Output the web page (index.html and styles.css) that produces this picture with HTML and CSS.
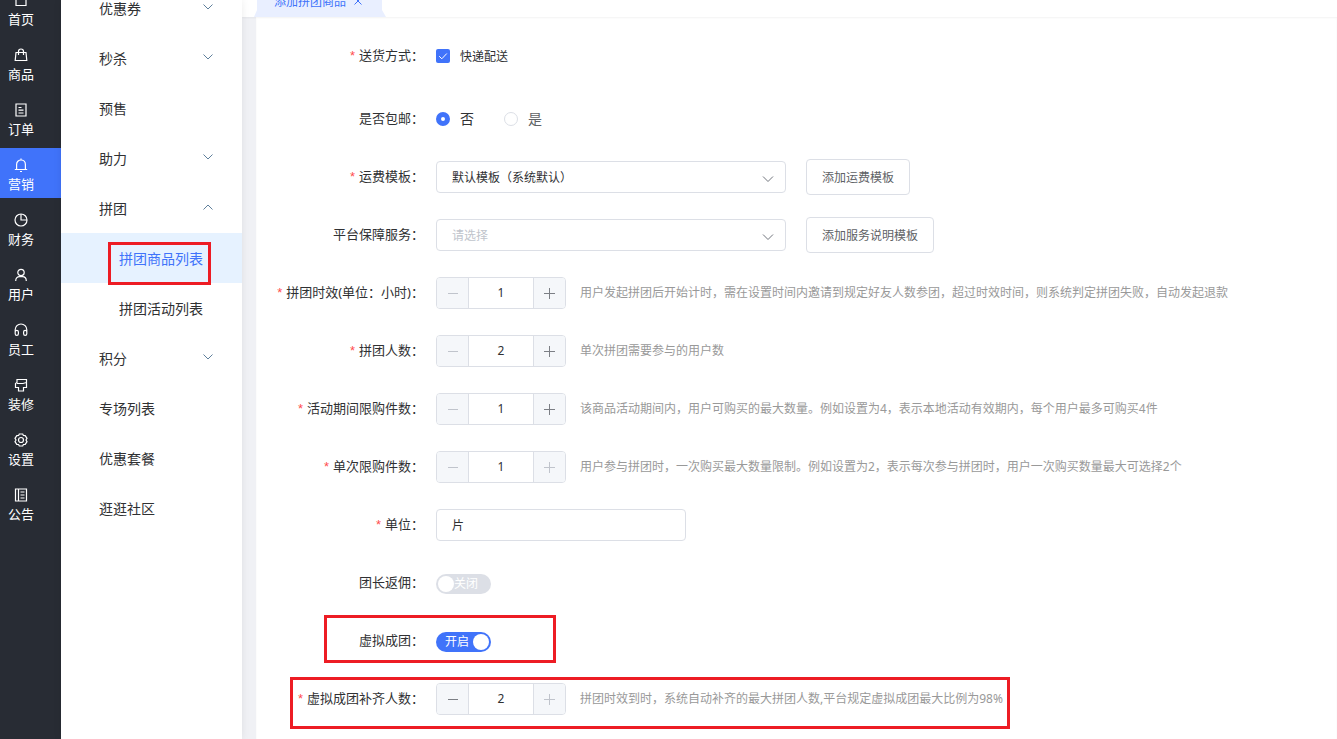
FILE: index.html
```html
<!DOCTYPE html>
<html lang="zh-CN">
<head>
    <meta charset="UTF-8">
    <meta name="viewport" content="width=device-width, initial-scale=1.0">
    <title>添加拼团商品</title>
    <link rel="stylesheet" href="styles.css">
</head>
<body>
    <div class="app">
        <nav class="rail">
            <a class="rail-item"><svg class="icon" viewBox="0 0 14 14"><path d="M2 5.5L7 1.5l5 4M2 5v7.500h10V5"/></svg><span>首页</span></a>
            <a class="rail-item"><svg class="icon" viewBox="0 0 14 14"><path d="M2 4.500h10l.800 8H1.200zM4.500 7V3.500a2.500 2.500 0 0 1 5 0V7"/></svg><span>商品</span></a>
            <a class="rail-item"><svg class="icon" viewBox="0 0 14 14"><path d="M2 1h10v12H2zM4.500 4.500h3M4.500 7.200h5M4.500 10h5"/></svg><span>订单</span></a>
            <a class="rail-item active"><svg class="icon" viewBox="0 0 14 14"><path d="M.8 11.500h12.400M2.600 11.500V6.400a4.400 4.400 0 0 1 8.800 0v5.100M7 .5V2M6 13.500h2"/></svg><span>营销</span></a>
            <a class="rail-item"><svg class="icon" viewBox="0 0 14 14"><circle cx="7" cy="7" r="6"/><path d="M7 1v6h6"/></svg><span>财务</span></a>
            <a class="rail-item"><svg class="icon" viewBox="0 0 14 14"><circle cx="7" cy="4.500" r="3.200"/><path d="M1.700 13c0-3 1.800-4.300 3.800-4.300h3c2 0 3.800 1.300 3.800 4.300"/></svg><span>用户</span></a>
            <a class="rail-item"><svg class="icon" viewBox="0 0 14 14"><path d="M1.200 9V6.800a5.800 5.800 0 0 1 11.600 0V9M1.200 9a1.600 1.600 0 0 1 3.200 0v1.800a1.600 1.600 0 0 1-3.200 0zM9.600 9a1.600 1.600 0 0 1 3.200 0v1.800a1.600 1.600 0 0 1-3.200 0z"/></svg><span>员工</span></a>
            <a class="rail-item"><svg class="icon" viewBox="0 0 14 14"><path d="M3 1.500h9.500v8H9.500v3.500h-5V9.500H1.500v-4L3 4.500zM3 5.500h6L12.500 4.500"/></svg><span>装修</span></a>
            <a class="rail-item"><svg class="icon" viewBox="0 0 14 14"><path d="M5.300 1h3.400l.7 1.500 1.800.1L13 5.300 12 7l1 1.700-1.800 2.700-1.800.1-.7 1.500H5.300l-.7-1.500-1.800-.1L1 8.700 2 7 1 5.300l1.800-2.700 1.800-.1z"/><circle cx="7" cy="7" r="2.500"/></svg><span>设置</span></a>
            <a class="rail-item"><svg class="icon" viewBox="0 0 14 14"><path d="M1.500 1h11v12h-11zM4.500 1v12M6.500 4h4M6.500 7h4M6.500 10h4"/></svg><span>公告</span></a>
        </nav>

        <aside class="menu">
            <a class="menu-item">优惠券<svg class="arrow" viewBox="0 0 12 12"><path d="M1.500 3.500L6 8l4.500-4.500"/></svg></a>
            <a class="menu-item">秒杀<svg class="arrow" viewBox="0 0 12 12"><path d="M1.500 3.500L6 8l4.500-4.500"/></svg></a>
            <a class="menu-item">预售</a>
            <a class="menu-item">助力<svg class="arrow" viewBox="0 0 12 12"><path d="M1.500 3.500L6 8l4.500-4.500"/></svg></a>
            <a class="menu-item">拼团<svg class="arrow" viewBox="0 0 12 12"><path d="M1.500 8.500L6 4l4.500 4.500"/></svg></a>
            <a class="menu-item sub active">拼团商品列表</a>
            <a class="menu-item sub">拼团活动列表</a>
            <a class="menu-item">积分<svg class="arrow" viewBox="0 0 12 12"><path d="M1.500 3.500L6 8l4.500-4.500"/></svg></a>
            <a class="menu-item">专场列表</a>
            <a class="menu-item">优惠套餐</a>
            <a class="menu-item">逛逛社区</a>
        </aside>

        <main class="main">
            <div class="tabs">
                <div class="tab">添加拼团商品<svg class="tab-close" viewBox="0 0 10 10"><path d="M1.500 1.500l7 7M8.500 1.500l-7 7"/></svg></div>
            </div>

            <form class="form">
                <div class="row row-check">
                    <label class="label required">送货方式：</label>
                    <span class="checkbox"><svg viewBox="0 0 14 14"><path d="M3.200 7.200l2.600 2.600 5-5.300"/></svg></span>
                    <span class="check-text">快递配送</span>
                </div>
                <div class="row row-radio">
                    <label class="label">是否包邮：</label>
                    <span class="radio checked"></span>
                    <span class="radio-text">否</span>
                    <span class="radio"></span>
                    <span class="radio-text muted">是</span>
                </div>
                <div class="row">
                    <label class="label required">运费模板：</label>
                    <div class="select">默认模板（系统默认）<svg class="select-arrow" viewBox="0 0 14 14"><path d="M2 4.500l5 5 5-5"/></svg></div>
                    <button type="button" class="btn">添加运费模板</button>
                </div>
                <div class="row">
                    <label class="label">平台保障服务：</label>
                    <div class="select placeholder">请选择<svg class="select-arrow" viewBox="0 0 14 14"><path d="M2 4.500l5 5 5-5"/></svg></div>
                    <button type="button" class="btn">添加服务说明模板</button>
                </div>
                <div class="row">
                    <label class="label required">拼团时效(单位：小时)：</label>
                    <div class="number"><i class="minus disabled"></i><span>1</span><i class="plus"></i></div>
                    <span class="hint">用户发起拼团后开始计时，需在设置时间内邀请到规定好友人数参团，超过时效时间，则系统判定拼团失败，自动发起退款</span>
                </div>
                <div class="row">
                    <label class="label required">拼团人数：</label>
                    <div class="number"><i class="minus disabled"></i><span>2</span><i class="plus"></i></div>
                    <span class="hint">单次拼团需要参与的用户数</span>
                </div>
                <div class="row">
                    <label class="label required">活动期间限购件数：</label>
                    <div class="number"><i class="minus disabled"></i><span>1</span><i class="plus"></i></div>
                    <span class="hint">该商品活动期间内，用户可购买的最大数量。例如设置为4，表示本地活动有效期内，每个用户最多可购买4件</span>
                </div>
                <div class="row">
                    <label class="label required">单次限购件数：</label>
                    <div class="number"><i class="minus disabled"></i><span>1</span><i class="plus disabled"></i></div>
                    <span class="hint">用户参与拼团时，一次购买最大数量限制。例如设置为2，表示每次参与拼团时，用户一次购买数量最大可选择2个</span>
                </div>
                <div class="row">
                    <label class="label required">单位：</label>
                    <div class="input">片</div>
                </div>
                <div class="row">
                    <label class="label">团长返佣：</label>
                    <div class="switch"><b></b>关闭</div>
                </div>
                <div class="row">
                    <label class="label">虚拟成团：</label>
                    <div class="switch on">开启<b></b></div>
                </div>
                <div class="row">
                    <label class="label required">虚拟成团补齐人数：</label>
                    <div class="number"><i class="minus"></i><span>2</span><i class="plus disabled"></i></div>
                    <span class="hint">拼团时效到时，系统自动补齐的最大拼团人数,平台规定虚拟成团最大比例为98%</span>
                </div>
            </form>
        </main>

        <!-- red highlight boxes -->
        <div class="mark mark-menu"></div>
        <div class="mark mark-switch"></div>
        <div class="mark mark-count"></div>
    </div>
</body>
</html>
```

FILE: styles.css
```css
* {
    box-sizing: border-box;
}
body {
    margin: 0;
    font-family: "Noto Sans", "Noto Sans CJK SC", sans-serif;
    font-size: 13px;
    color: #303133;
    background-color: #fff;
}
svg {
    fill: none;
    stroke: currentColor;
    flex: none;
}
.app {
    position: relative;
    display: flex;
    height: 739px;
    overflow: hidden;
}

/* dark rail */
.rail {
    width: 61px;
    flex: none;
    background-color: #282c34;
    color: #fff;
}
.rail-item {
    display: flex;
    flex-direction: column;
    align-items: flex-start;
    height: 50px;
    margin-bottom: 5px;
    padding: 10px 0 0 8px;
    line-height: 18px;
}
.rail-item:first-child {
    margin-top: -17px;
}
.rail-item.active {
    background-color: #4073fa;
}
.rail-item .icon {
    width: 14px;
    height: 14px;
    margin: 0 0 3px 6px;
    stroke-width: 1.2;
}

/* second level menu */
.menu {
    position: relative;
    z-index: 1;
    width: 181px;
    flex: none;
    background-color: #fff;
    box-shadow: 0 0 8px rgba(0,0,0,0.08);
    font-size: 14px;
}
.menu-item {
    display: flex;
    align-items: center;
    justify-content: space-between;
    height: 50px;
    padding: 0 28px 0 38px;
}
.menu-item:first-child {
    margin-top: -17px;
}
.menu-item.sub {
    padding-left: 58px;
}
.menu-item.active {
    background-color: #e6f2ff;
    color: #4073fa;
}
.arrow {
    width: 12px;
    height: 12px;
    margin-top: -2px;
    stroke: #5f7f9b;
}

/* content */
.main {
    flex: 1;
    min-width: 0;
    display: flex;
    flex-direction: column;
    background-color: #f0f1f5;
}
.tabs {
    height: 17px;
    flex: none;
    padding-left: 12px;
    background-color: #fff;
    box-shadow: 0 1px 2px rgba(0,0,0,0.05);
}
.tab {
    display: flex;
    align-items: center;
    width: 132px;
    height: 34px;
    margin-top: -17px;
    padding: 1px 0 0 20px;
    font-size: 12px;
    color: #4073fa;
    background-color: #e9efff;
    clip-path: polygon(3px 0, 128px 0, 128px 27px, 132px 34px, 0 34px, 3px 27px);
}
.tab-close {
    width: 10px;
    height: 10px;
    margin-left: 7px;
}
.form {
    position: relative;
    flex: 1;
    margin-left: 14px;
    padding-top: 22px;
    background-color: #fff;
    box-shadow: inset 0 1px 2px rgba(0,0,0,0.05);
}
.row {
    display: flex;
    align-items: center;
    height: 32px;
    margin-bottom: 26px;
}
.row-check {
    height: 34px;
    margin-bottom: 29px;
}
.row-radio {
    margin-bottom: 27px;
}
.label {
    width: 168px;
    flex: none;
    margin-right: 12px;
    padding-bottom: 2px;
    line-height: 18px;
    text-align: right;
    white-space: nowrap;
}
.row-radio .label {
    padding-bottom: 0;
}
.required::before {
    content: "*";
    margin-right: 4px;
    font-family: "Liberation Sans", Arial, sans-serif;
    color: #ff4d4f;
}
.checkbox {
    display: flex;
    width: 14px;
    height: 14px;
    border-radius: 2px;
    background-color: #4073fa;
    color: #fff;
}
.check-text {
    margin-left: 10px;
    font-size: 12px;
}
.radio {
    width: 14px;
    height: 14px;
    margin-top: 2px;
    border: 1px solid #dcdfe6;
    border-radius: 50%;
}
.radio.checked {
    border: 5px solid #4073fa;
}
.radio-text {
    margin: -1px 30px 0 10px;
    font-size: 14px;
}
.muted {
    color: #606266;
}
.select, .input {
    display: flex;
    align-items: center;
    justify-content: space-between;
    width: 350px;
    height: 32px;
    padding: 0 10px 0 15px;
    border: 1px solid #dcdfe6;
    border-radius: 4px;
    font-size: 12px;
}
.input {
    width: 250px;
}
.placeholder {
    color: #c0c4cc;
}
.select-arrow {
    width: 14px;
    height: 14px;
    margin-top: 3px;
    color: #70747c;
}
.btn {
    height: 36px;
    margin-left: 20px;
    padding: 0 15px 1px;
    border: 1px solid #dcdfe6;
    border-radius: 4px;
    background-color: #fff;
    font-family: inherit;
    font-size: 12px;
    color: #606266;
}
.number {
    display: flex;
    width: 130px;
    height: 32px;
    flex: none;
    border: 1px solid #dcdfe6;
    border-radius: 4px;
    overflow: hidden;
    font-size: 12px;
}
.number span {
    flex: 1;
    border: solid #dcdfe6;
    border-width: 0 1px;
    line-height: 30px;
    text-align: center;
}
.number i {
    width: 31px;
    color: #7c7f85;
    background: linear-gradient(currentColor, currentColor) center / 10px 1px no-repeat #f5f7fa;
}
.number .plus {
    background: linear-gradient(currentColor, currentColor) center / 11px 1px no-repeat, linear-gradient(currentColor, currentColor) center / 1px 11px no-repeat #f5f7fa;
}
.number .disabled {
    color: #c0c4cc;
}
.hint {
    margin-left: 14px;
    padding-bottom: 2px;
    font-size: 12px;
    color: #999;
    white-space: nowrap;
}
.switch {
    display: flex;
    align-items: center;
    width: 55px;
    height: 20px;
    margin-top: 2px;
    padding-left: 2px;
    border-radius: 10px;
    background-color: #dcdfe6;
    color: #fff;
    font-size: 12px;
    line-height: 18px;
}
.switch.on {
    padding-left: 9px;
    background-color: #4073fa;
}
.switch b {
    width: 16px;
    height: 16px;
    border-radius: 50%;
    background-color: #fff;
}
.switch.on b {
    margin-left: 4px;
}

.mark {
    position: absolute;
    z-index: 2;
    border: 3px solid #ed1c24;
}
.mark-menu {
    left: 108px;
    top: 242px;
    width: 103px;
    height: 43px;
}
.mark-switch {
    left: 324px;
    top: 615px;
    width: 232px;
    height: 48px;
}
.mark-count {
    left: 290px;
    top: 677px;
    width: 720px;
    height: 52px;
}
```
